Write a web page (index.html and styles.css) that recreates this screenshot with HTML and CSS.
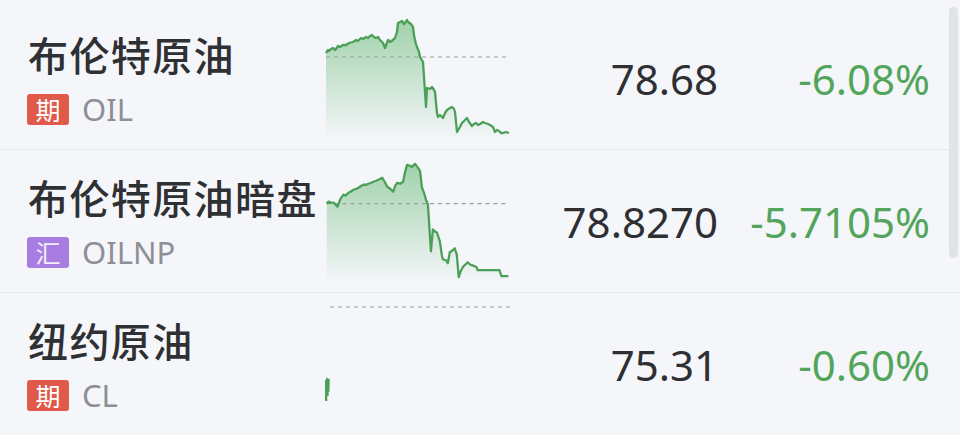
FILE: index.html
```html
<!DOCTYPE html>
<html lang="zh-CN">
<head>
    <meta charset="UTF-8">
    <meta name="viewport" content="width=device-width, initial-scale=1.0">
    <title>原油行情</title>
    <link rel="stylesheet" href="styles.css">
</head>
<body>
    <div class="quote-list">
        <div class="quote-row first">
            <div class="quote-name">
                <div class="name">布伦特原油</div>
                <div class="sub"><span class="tag tag-futures">期</span><span class="code">OIL</span></div>
            </div>
            <svg class="spark" viewBox="325 0 190 150" width="190" height="150">
                <defs>
                    <linearGradient id="fill1" x1="0" y1="0" x2="0" y2="1">
                        <stop offset="0" stop-color="#5cb46a" stop-opacity="0.55"/>
                        <stop offset="1" stop-color="#5cb46a" stop-opacity="0.02"/>
                    </linearGradient>
                </defs>
                <path class="area" fill="url(#fill1)" d="M326 53 L333 48 L340 47 L353 42 L363 39 L372 35 L376 38 L380 40 L385 48 L388 40 L395 38 L398 23 L402 21 L405 23 L408 22 L413 27 L415 40 L417 47 L420 57 L423 62 L426 107 L427 88 L432 87 L435 92 L438 117 L443 118 L447 110 L452 107 L455 112 L457 132 L462 123 L467 118 L472 126 L480 124 L490 125 L493 127 L495 132 L503 133 L509 133 L509 137 L326 137 Z"/>
                <line class="base" x1="326" y1="57" x2="510" y2="57"/>
                <path class="line" d="M326 53 L328 50 L329 51 L331 49 L333 48 L335 50 L336 49 L338 46 L340 47 L343 45 L346 45 L349 43 L353 42 L356 40 L358 41 L361 38 L363 39 L366 37 L368 38 L370 36 L372 35 L374 37 L376 38 L378 37 L380 40 L383 43 L385 48 L388 40 L390 42 L392 41 L395 38 L397 32 L398 23 L400 22 L402 21 L404 24 L405 23 L407 20 L408 22 L411 24 L413 27 L414 35 L415 40 L416 44 L417 47 L419 52 L420 57 L423 62 L426 107 L427 88 L430 89 L432 87 L434 90 L435 92 L437 113 L438 117 L440 115 L443 118 L445 113 L447 110 L450 108 L452 107 L454 109 L455 112 L457 132 L460 127 L462 123 L465 120 L467 118 L469 122 L472 126 L474 124 L476 123 L478 125 L480 124 L483 122 L485 123 L488 124 L490 125 L493 127 L495 132 L497 130 L499 131 L501 133 L503 133 L506 132 L509 133"/>
            </svg>
            <div class="price">78.68</div>
            <div class="change">-6.08%</div>
        </div>

        <div class="quote-row second">
            <div class="quote-name">
                <div class="name">布伦特原油暗盘</div>
                <div class="sub"><span class="tag tag-forex">汇</span><span class="code">OILNP</span></div>
            </div>
            <svg class="spark" viewBox="325 150 190 143" width="190" height="143">
                <defs>
                    <linearGradient id="fill2" x1="0" y1="0" x2="0" y2="1">
                        <stop offset="0" stop-color="#5cb46a" stop-opacity="0.55"/>
                        <stop offset="1" stop-color="#5cb46a" stop-opacity="0.02"/>
                    </linearGradient>
                </defs>
                <path class="area" fill="url(#fill2)" d="M326 204 L333 203 L337 207 L343 195 L353 190 L363 185 L373 182 L382 178 L387 187 L393 192 L397 183 L403 182 L407 165 L412 167 L415 164 L420 171 L422 188 L426 200 L428 205 L431 252 L433 230 L437 233 L440 242 L443 260 L448 264 L450 253 L455 249 L457 255 L459 278 L463 268 L468 263 L477 268 L478 271 L500 271 L502 277 L509 277 L509 281 L326 281 Z"/>
                <line class="base" x1="326" y1="204" x2="510" y2="204"/>
                <path class="line" d="M326 204 L328 202 L330 203 L333 203 L335 205 L337 207 L340 199 L343 195 L345 196 L348 193 L350 192 L353 190 L356 189 L358 188 L361 186 L363 185 L366 185 L368 184 L371 183 L373 182 L376 181 L378 180 L380 179 L382 178 L385 183 L387 187 L390 189 L393 192 L395 186 L397 183 L400 184 L403 182 L405 172 L407 165 L410 166 L412 167 L415 164 L418 168 L420 171 L422 188 L424 193 L426 200 L428 205 L431 252 L433 230 L435 232 L437 233 L440 242 L442 256 L443 260 L446 261 L448 264 L450 253 L453 251 L455 249 L457 255 L459 278 L461 272 L463 268 L466 265 L468 263 L470 265 L472 266 L475 267 L477 268 L478 271 L500 271 L502 277 L509 277"/>
            </svg>
            <div class="price">78.8270</div>
            <div class="change">-5.7105%</div>
        </div>

        <div class="quote-row third">
            <div class="quote-name">
                <div class="name">纽约原油</div>
                <div class="sub"><span class="tag tag-futures">期</span><span class="code">CL</span></div>
            </div>
            <svg class="spark" viewBox="325 293 190 142" width="190" height="142">
                <line class="base" x1="330" y1="307" x2="510" y2="307"/>
                <path class="line" d="M325.8 380 L326.2 401 M327.2 378 L327.6 396 M328.6 379 L328.3 392"/>
            </svg>
            <div class="price">75.31</div>
            <div class="change">-0.60%</div>
        </div>

        <div class="scrollbar"></div>
    </div>
</body>
</html>
```

FILE: styles.css
```css
body {
    margin: 0;
    background-color: #f5f6fa;
    font-family: "Noto Sans", "Noto Sans CJK SC", sans-serif;
    color: #2f3033;
}
.quote-list {
    position: relative;
    width: 960px;
    height: 435px;
    overflow: hidden;
}
.quote-row {
    display: grid;
    grid-template-columns: 297px 190px 203px 212px;
    align-items: center;
    padding-left: 28px;
    box-sizing: border-box;
    border-bottom: 1px solid #e7e8ec;
}
.quote-row.first {
    height: 150px;
    padding-top: 6px;
}
.quote-row.second {
    height: 143px;
}
.quote-row.third {
    height: 142px;
    border-bottom: none;
}
.quote-name {
    display: flex;
    flex-direction: column;
}
.name {
    font-family: "Noto Sans CJK SC", sans-serif;
    font-size: 40px;
    font-weight: 500;
    line-height: 50px;
    white-space: nowrap;
    letter-spacing: 1.4px;
}
.sub {
    display: flex;
    align-items: center;
    height: 36px;
    margin-top: 12px;
}
.tag {
    display: inline-flex;
    align-items: center;
    justify-content: center;
    width: 42px;
    height: 31px;
    border-radius: 3px;
    color: #fff;
    font-family: "Noto Sans CJK SC", sans-serif;
    font-size: 25px;
    margin-left: -1px;
}
.tag-futures {
    background-color: #e0594a;
}
.tag-forex {
    background-color: #a77de2;
    color: #f3ecfc;
}
.code {
    margin-left: 13px;
    font-size: 31px;
    color: #8d8f95;
}
.spark {
    display: block;
    align-self: stretch;
    height: 100%;
}
.quote-row.first .spark {
    margin-top: -6px;
    height: 150px;
}
.spark .base {
    stroke: #9a9ca2;
    stroke-width: 1.2;
    stroke-dasharray: 4 4;
}
.spark .line {
    fill: none;
    stroke: #4c9f57;
    stroke-width: 2.3;
    stroke-linejoin: round;
}
.price {
    text-align: right;
    font-size: 42px;
    color: #2e2f33;
}
.change {
    text-align: right;
    font-size: 42px;
    color: #52a55b;
}
.scrollbar {
    position: absolute;
    top: 7px;
    left: 949px;
    width: 9px;
    height: 251px;
    border-radius: 5px;
    background-color: #e2e3e7;
}
```
